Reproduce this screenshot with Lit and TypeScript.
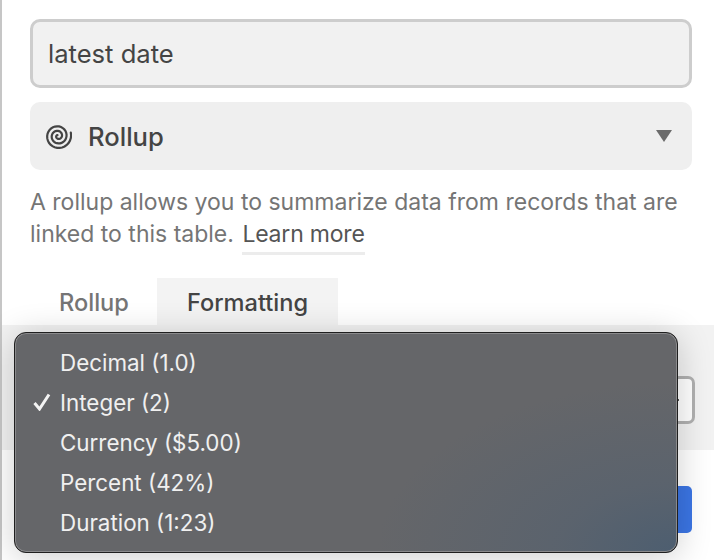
import { LitElement, html, css } from "lit";
import { customElement } from "lit/decorators.js";

const OPTIONS = ["Decimal (1.0)", "Integer (2)", "Currency ($5.00)", "Percent (42%)", "Duration (1:23)"];
const SELECTED = "Integer (2)";

// archimedean spiral, outer end sits just above the 3 o'clock position
function spiralPoints() {
  const turns = 2.7;
  const pts: string[] = [];
  for (let i = 0; i <= 80; i++) {
    const t = (i / 80) * turns;
    const r = 1 + 4.55 * t;
    const a = ((-15 + (turns - t) * 360) * Math.PI) / 180;
    pts.push(`${(14 + r * Math.cos(a)).toFixed(2)},${(14 + r * Math.sin(a)).toFixed(2)}`);
  }
  return pts.join(" ");
}

@customElement("app-root")
export class AppRoot extends LitElement {
  static styles = css`
    :host {
      display: block;
      position: relative;
      width: 714px;
      height: 560px;
      overflow: hidden;
      background: #fff;
      font-family: Inter, "Liberation Sans", sans-serif;
      color: #444;
    }

    .panel {
      height: 560px;
      box-sizing: border-box;
      border-left: 2px solid #c6c6c6;
      padding-top: 19px;
      display: flex;
      flex-direction: column;
    }

    .top {
      padding: 0 22px 0 28px;
      display: flex;
      flex-direction: column;
    }

    .name {
      box-sizing: border-box;
      height: 69px;
      border: 3px solid #cdcdcd;
      border-radius: 10px;
      background: #f1f1f1;
      padding-left: 15px;
      display: flex;
      align-items: center;
      font-size: 25.6px;
    }

    .type {
      margin-top: 14px;
      height: 68px;
      border-radius: 10px;
      background: #efefef;
      padding: 0 20px 0 14px;
      display: flex;
      align-items: center;
      gap: 16px;
      font-size: 25.6px;
      font-weight: 500;
    }

    .type span {
      flex: 1;
    }

    .help {
      margin: 16px 0 0;
      font-size: 23px;
      line-height: 32px;
      color: #757575;
    }

    .help a {
      color: #555;
      margin-left: 2px;
      letter-spacing: -0.2px;
      padding-bottom: 4px;
      border-bottom: 3px solid #ececec;
    }

    .tabs {
      margin-top: 28px;
      padding-left: 57px;
      display: flex;
      font-size: 23.6px;
      font-weight: 500;
    }

    .tab {
      height: 47px;
      box-sizing: border-box;
      padding-top: 10px;
      color: #757575;
      margin-right: 28px;
    }

    .tab.active {
      margin-right: 0;
      padding: 10px 30px 0;
      background: #f3f3f3;
      color: #444;
    }

    .band {
      height: 125px;
      background: #f2f2f2;
      display: flex;
      justify-content: flex-end;
      align-items: center;
      padding-right: 19px;
    }

    .field {
      width: 40px;
      height: 48px;
      margin-top: 25px;
      box-sizing: border-box;
      border: 3px solid #b0b0b0;
      border-radius: 7px;
      background: #fff;
      display: flex;
      align-items: center;
      padding-left: 19px;
    }

    .field i {
      width: 2px;
      height: 2px;
      background: #555;
    }

    .footer {
      margin-top: 36px;
      padding-right: 22px;
      display: flex;
      justify-content: flex-end;
    }

    .save {
      width: 60px;
      height: 47px;
      border-radius: 5px;
      background: #3b75e4;
    }

    .menu {
      position: absolute;
      left: 14px;
      top: 332px;
      width: 664px;
      height: 221px;
      box-sizing: border-box;
      padding: 9px 0;
      border-radius: 12px;
      border: 1px solid #1f1f1f;
      box-shadow: inset 0 0 0 1px #8a8a8c, 0 4px 34px rgba(0, 0, 0, 0.2);
      background:
        radial-gradient(ellipse 300px 170px at 100% 100%, #4d5e70 0%, rgba(88, 98, 110, 0.8) 40%, rgba(101, 102, 105, 0) 100%),
        #656669;
      color: #f0f0f0;
      font-size: 22.4px;
      font-weight: 400;
    }

    .item {
      height: 40px;
      display: flex;
      align-items: center;
      padding-left: 45px;
      position: relative;
    }

    .check {
      position: absolute;
      left: 18px;
      top: 11px;
    }
  `;

  render() {
    return html`
      <div class="panel">
        <div class="top">
          <div class="name">latest date</div>
          <div class="type">
            <svg width="28" height="28" viewBox="0 0 28 28" fill="none" stroke="#444" stroke-width="2.2" stroke-linecap="round">
              <polyline points=${spiralPoints()}></polyline>
            </svg>
            <span>Rollup</span>
            <svg width="16" height="12" viewBox="0 0 16 12"><path d="M0 0H16L8 12Z" fill="#6b6b6b"/></svg>
          </div>
          <div class="help">
            <div>A rollup allows you to summarize data from records that are</div>
            <div><span>linked to this table.</span> <a>Learn more</a></div>
          </div>
        </div>
        <div class="tabs">
          <div class="tab">Rollup</div>
          <div class="tab active">Formatting</div>
        </div>
        <div class="band"><div class="field"><i></i></div></div>
        <div class="footer"><div class="save"></div></div>
      </div>
      <div class="menu">
        ${OPTIONS.map(
          (o) => html`<div class="item">
            ${o === SELECTED
              ? html`<svg class="check" width="18" height="18" viewBox="0 0 18 18" fill="none" stroke="#f4f4f4" stroke-width="3">
                  <path d="M1.5 10L6.5 16L16 1.5"/>
                </svg>`
              : ""}
            ${o}
          </div>`
        )}
      </div>
    `;
  }
}
